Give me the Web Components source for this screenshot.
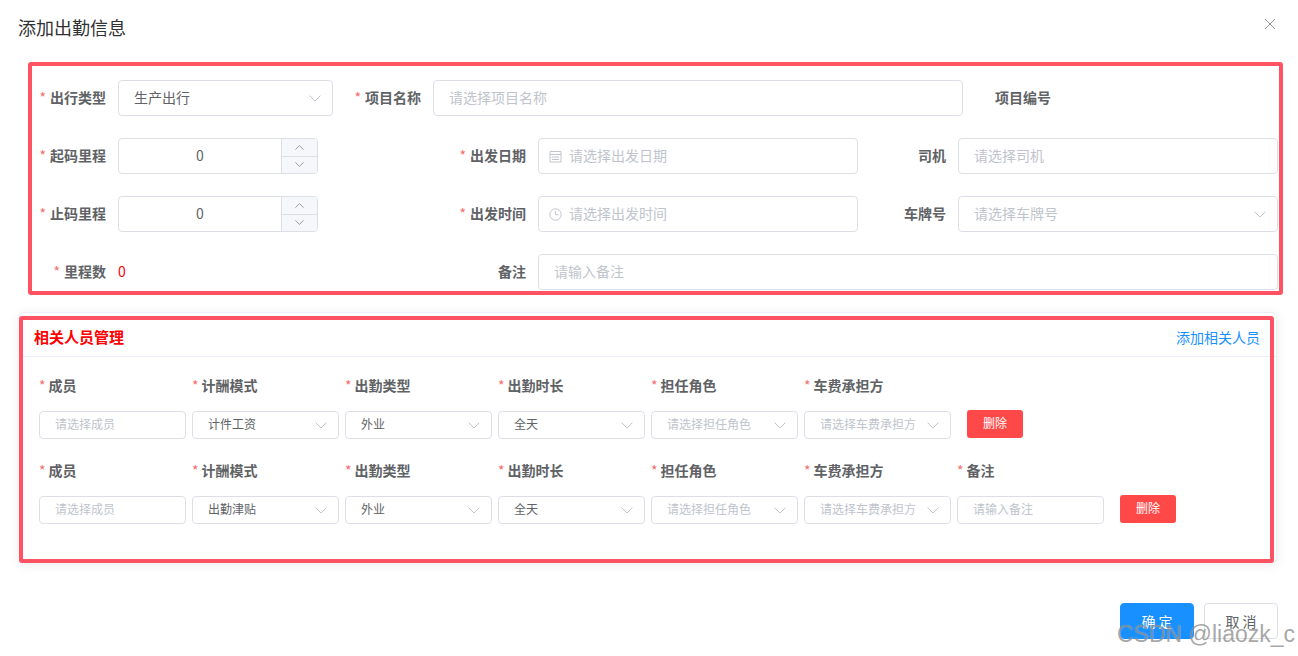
<!DOCTYPE html>
<html lang="zh">
<head>
<meta charset="utf-8">
<title>添加出勤信息</title>
<style>
  html, body { margin: 0; height: 100%; background: #fff; overflow: hidden; }
  body { font-family: "Noto Sans CJK SC", "Noto Sans", sans-serif; font-size: 14px; color: #606266; }
  .row { display: flex; align-items: center; height: 36px; }
  .staff { display: flex; gap: 6px; align-items: flex-end; }
</style>
</head>
<body>

<attendance-dialog heading="添加出勤信息">
  <div class="row">
    <form-field label="出行类型" required><drop-select value="生产出行" width="215"></drop-select></form-field>
    <form-field label="项目名称" required><drop-select placeholder="请选择项目名称" width="530" no-arrow></drop-select></form-field>
    <form-field label="项目编号" no-control></form-field>
  </div>
  <div class="row">
    <form-field label="起码里程" required><number-box value="0"></number-box></form-field>
    <form-field label="出发日期" required wide><text-box placeholder="请选择出发日期" icon="date" width="320"></text-box></form-field>
    <form-field label="司机"><text-box placeholder="请选择司机" width="320"></text-box></form-field>
  </div>
  <div class="row">
    <form-field label="止码里程" required><number-box value="0"></number-box></form-field>
    <form-field label="出发时间" required wide><text-box placeholder="请选择出发时间" icon="time" width="320"></text-box></form-field>
    <form-field label="车牌号"><drop-select placeholder="请选择车牌号" width="320"></drop-select></form-field>
  </div>
  <div class="row">
    <form-field label="里程数" required><span style="display:block;width:200px;color:#f00;padding-bottom:2px">0</span></form-field>
    <form-field label="备注" wide><text-box placeholder="请输入备注" width="740"></text-box></form-field>
  </div>

  <staff-card slot="card" heading="相关人员管理" action="添加相关人员">
    <div class="staff">
      <staff-cell label="成员"><text-box small placeholder="请选择成员"></text-box></staff-cell>
      <staff-cell label="计酬模式"><drop-select small value="计件工资"></drop-select></staff-cell>
      <staff-cell label="出勤类型"><drop-select small value="外业"></drop-select></staff-cell>
      <staff-cell label="出勤时长"><drop-select small value="全天"></drop-select></staff-cell>
      <staff-cell label="担任角色"><drop-select small placeholder="请选择担任角色"></drop-select></staff-cell>
      <staff-cell label="车费承担方"><drop-select small placeholder="请选择车费承担方"></drop-select></staff-cell>
      <danger-button>删除</danger-button>
    </div>
    <div class="staff">
      <staff-cell label="成员"><text-box small placeholder="请选择成员"></text-box></staff-cell>
      <staff-cell label="计酬模式"><drop-select small value="出勤津贴"></drop-select></staff-cell>
      <staff-cell label="出勤类型"><drop-select small value="外业"></drop-select></staff-cell>
      <staff-cell label="出勤时长"><drop-select small value="全天"></drop-select></staff-cell>
      <staff-cell label="担任角色"><drop-select small placeholder="请选择担任角色"></drop-select></staff-cell>
      <staff-cell label="车费承担方"><drop-select small placeholder="请选择车费承担方"></drop-select></staff-cell>
      <staff-cell label="备注"><text-box small placeholder="请输入备注"></text-box></staff-cell>
      <danger-button>删除</danger-button>
    </div>
  </staff-card>
</attendance-dialog>

<script>
const chevron = `<svg width="12" height="7" viewBox="0 0 12 7" fill="none" stroke="#c0c4cc" stroke-width="1"><path d="M.6.6 6 6 11.4.6"/></svg>`;

const icons = {
  date: `<svg width="13" height="13" viewBox="0 0 13 13" fill="none" stroke="#c0c4cc" stroke-width="1"><path d="M1 1.5h11v10.5H1zM1 4.5h11M3 7h7M3 9.5h7"/></svg>`,
  time: `<svg width="13" height="13" viewBox="0 0 13 13" fill="none" stroke="#c0c4cc" stroke-width="1"><circle cx="6.5" cy="6.5" r="5.7"/><path d="M6.5 3v3.8h3"/></svg>`
};

class AttendanceDialog extends HTMLElement {
  constructor() {
    super();
    this.attachShadow({ mode: 'open' });
    this.shadowRoot.innerHTML = `
      <style>
        :host { display: block; position: relative; height: 656px; box-sizing: border-box; }
        header { display: flex; justify-content: space-between; padding: 14px 22px 0 18px; height: 80px; box-sizing: border-box; }
        h1 { margin: 0; font-size: 18px; font-weight: 400; line-height: 26px; color: #303133; }
        .close { margin-top: 4px; width: 12px; height: 12px; }
        .form { display: flex; flex-direction: column; gap: 22px; padding-left: 18px; }
        .card { margin: 22px 21px 0 19px; }
        footer { display: flex; justify-content: flex-end; gap: 10px; padding: 40px 20px 0 0; }
        button { width: 74px; height: 36px; box-sizing: border-box; border-radius: 4px; font: inherit; font-size: 14px; padding: 0; }
        .ok { background: #1890ff; border: 1px solid #1890ff; color: #fff; }
        .cancel { background: #fff; border: 1px solid #dcdfe6; color: #606266; }
        .frame { position: absolute; box-sizing: border-box; width: 1255px; border: 4px solid #ff5263; border-radius: 3px; pointer-events: none; }
        .f1 { left: 28px; top: 62px; height: 233px; }
        .f2 { left: 19px; top: 316px; height: 247px; }
        .mark { position: absolute; left: 1117px; top: 619px; font: 23px/30px "Liberation Sans", sans-serif; color: rgba(110,110,110,.62); white-space: nowrap; text-shadow: 0 0 1px rgba(255,255,255,.5); }
      </style>
      <header>
        <h1>${this.getAttribute('heading')}</h1>
        <svg class="close" viewBox="0 0 12 12" fill="none" stroke="#909399" stroke-width="1"><path d="M1 1l10 10M11 1 1 11"/></svg>
      </header>
      <div class="form"><slot></slot></div>
      <div class="card"><slot name="card"></slot></div>
      <footer>
        <button class="ok">确 定</button>
        <button class="cancel">取 消</button>
      </footer>
      <div class="frame f1"></div>
      <div class="frame f2"></div>
      <div class="mark">CSDN @liaozk_c</div>
    `;
  }
}

class FormField extends HTMLElement {
  constructor() {
    super();
    this.attachShadow({ mode: 'open' });
    const star = this.hasAttribute('required') ? '<i>*</i>' : '';
    const width = this.hasAttribute('wide') ? 208 : 88;
    this.shadowRoot.innerHTML = `
      <style>
        :host { display: flex; align-items: center; height: 36px; }
        label { width: ${width}px; padding-bottom: 2px; text-align: right; font-weight: 700; font-size: 14px; color: #606266; white-space: nowrap; }
        i { font-style: normal; font-weight: 400; color: #f56c6c; margin-right: 4px; }
        .ctl { margin-left: 12px; }
      </style>
      <label>${star}${this.getAttribute('label')}</label>
      ${this.hasAttribute('no-control') ? '' : '<div class="ctl"><slot></slot></div>'}
    `;
  }
}

class DropSelect extends HTMLElement {
  constructor() {
    super();
    this.attachShadow({ mode: 'open' });
    const small = this.hasAttribute('small');
    const value = this.getAttribute('value');
    const text = value || this.getAttribute('placeholder');
    const width = this.getAttribute('width') || 147;
    this.shadowRoot.innerHTML = `
      <style>
        :host { display: block; width: ${width}px; }
        div { display: flex; align-items: center; justify-content: space-between; box-sizing: border-box;
              height: ${small ? 28 : 36}px; padding: 0 11px 0 15px; background: #fff;
              border: 1px solid #dcdfe6; border-radius: 4px; font-size: ${small ? 12 : 14}px;
              color: ${value ? '#606266' : '#c0c4cc'}; white-space: nowrap; }
        span { padding-bottom: ${small ? 4 : 2}px; }
      </style>
      <div><span>${text}</span>${this.hasAttribute('no-arrow') ? '' : chevron}</div>
    `;
  }
}

class TextBox extends HTMLElement {
  constructor() {
    super();
    this.attachShadow({ mode: 'open' });
    const small = this.hasAttribute('small');
    const icon = icons[this.getAttribute('icon')] || '';
    const width = this.getAttribute('width') || 147;
    this.shadowRoot.innerHTML = `
      <style>
        :host { display: block; width: ${width}px; }
        div { display: flex; align-items: center; gap: 7px; box-sizing: border-box;
              height: ${small ? 28 : 36}px; padding-left: ${icon ? 10 : 15}px; background: #fff;
              border: 1px solid #dcdfe6; border-radius: 4px; font-size: ${small ? 12 : 14}px; color: #c0c4cc; white-space: nowrap; }
        span { padding-bottom: ${small ? 4 : 2}px; }
        svg { display: block; }
      </style>
      <div>${icon}<span>${this.getAttribute('placeholder')}</span></div>
    `;
  }
}

class NumberBox extends HTMLElement {
  constructor() {
    super();
    this.attachShadow({ mode: 'open' });
    this.shadowRoot.innerHTML = `
      <style>
        :host { display: block; width: 200px; }
        .box { display: flex; box-sizing: border-box; height: 36px; border: 1px solid #dcdfe6; border-radius: 4px; overflow: hidden; }
        .val { flex: 1; text-align: center; line-height: 32px; font-size: 14px; color: #606266; }
        .step { width: 36px; box-sizing: border-box; border-left: 1px solid #dcdfe6; background: #f5f7fa; display: flex; flex-direction: column; }
        .step span { flex: 1; display: flex; align-items: center; justify-content: center; }
        .step span + span { border-top: 1px solid #dcdfe6; }
        svg { display: block; }
      </style>
      <div class="box">
        <div class="val">${this.getAttribute('value')}</div>
        <div class="step">
          <span><svg width="9" height="5" viewBox="0 0 9 5" fill="none" stroke="#909399" stroke-width=".9"><path d="M.4 4.6 4.5.6l4.1 4"/></svg></span>
          <span><svg width="9" height="5" viewBox="0 0 9 5" fill="none" stroke="#909399" stroke-width=".9"><path d="M.4.4l4.1 4 4.1-4"/></svg></span>
        </div>
      </div>
    `;
  }
}

class StaffCard extends HTMLElement {
  constructor() {
    super();
    this.attachShadow({ mode: 'open' });
    this.shadowRoot.innerHTML = `
      <style>
        :host { display: block; box-sizing: border-box; height: 251px; background: #fff; border: 1px solid #ebeef5; border-radius: 4px; box-shadow: 0 2px 12px rgba(0,0,0,.08); }
        .head { display: flex; justify-content: space-between; align-items: center; box-sizing: border-box; height: 44px; padding: 4px 16px 0 14px; border-bottom: 1px solid #ebeef5; }
        b { font-size: 15px; font-weight: 700; color: #f00; }
        a { font-size: 14px; color: #1890ff; }
        .body { display: flex; flex-direction: column; gap: 18px; padding: 15px 0 0 19px; }
      </style>
      <div class="head"><b>${this.getAttribute('heading')}</b><a>${this.getAttribute('action')}</a></div>
      <div class="body"><slot></slot></div>
    `;
  }
}

class StaffCell extends HTMLElement {
  constructor() {
    super();
    this.attachShadow({ mode: 'open' });
    this.shadowRoot.innerHTML = `
      <style>
        :host { display: block; }
        label { display: block; height: 28px; line-height: 26px; margin-bottom: 11px; font-size: 14px; font-weight: 700; color: #606266; white-space: nowrap; }
        i { font-style: normal; font-weight: 400; color: #f56c6c; margin-right: 3px; }
      </style>
      <label><i>*</i>${this.getAttribute('label')}</label>
      <slot></slot>
    `;
  }
}

class DangerButton extends HTMLElement {
  constructor() {
    super();
    this.attachShadow({ mode: 'open' });
    this.shadowRoot.innerHTML = `
      <style>
        :host { display: block; margin: 0 0 1px 10px; }
        button { display: block; width: 56px; height: 28px; padding: 0 0 4px; border: 0; border-radius: 3px; background: #ff4949; color: #fff; font: inherit; font-size: 12px; }
      </style>
      <button><slot></slot></button>
    `;
  }
}

customElements.define('attendance-dialog', AttendanceDialog);
customElements.define('form-field', FormField);
customElements.define('drop-select', DropSelect);
customElements.define('text-box', TextBox);
customElements.define('number-box', NumberBox);
customElements.define('staff-card', StaffCard);
customElements.define('staff-cell', StaffCell);
customElements.define('danger-button', DangerButton);
</script>
</body>
</html>
